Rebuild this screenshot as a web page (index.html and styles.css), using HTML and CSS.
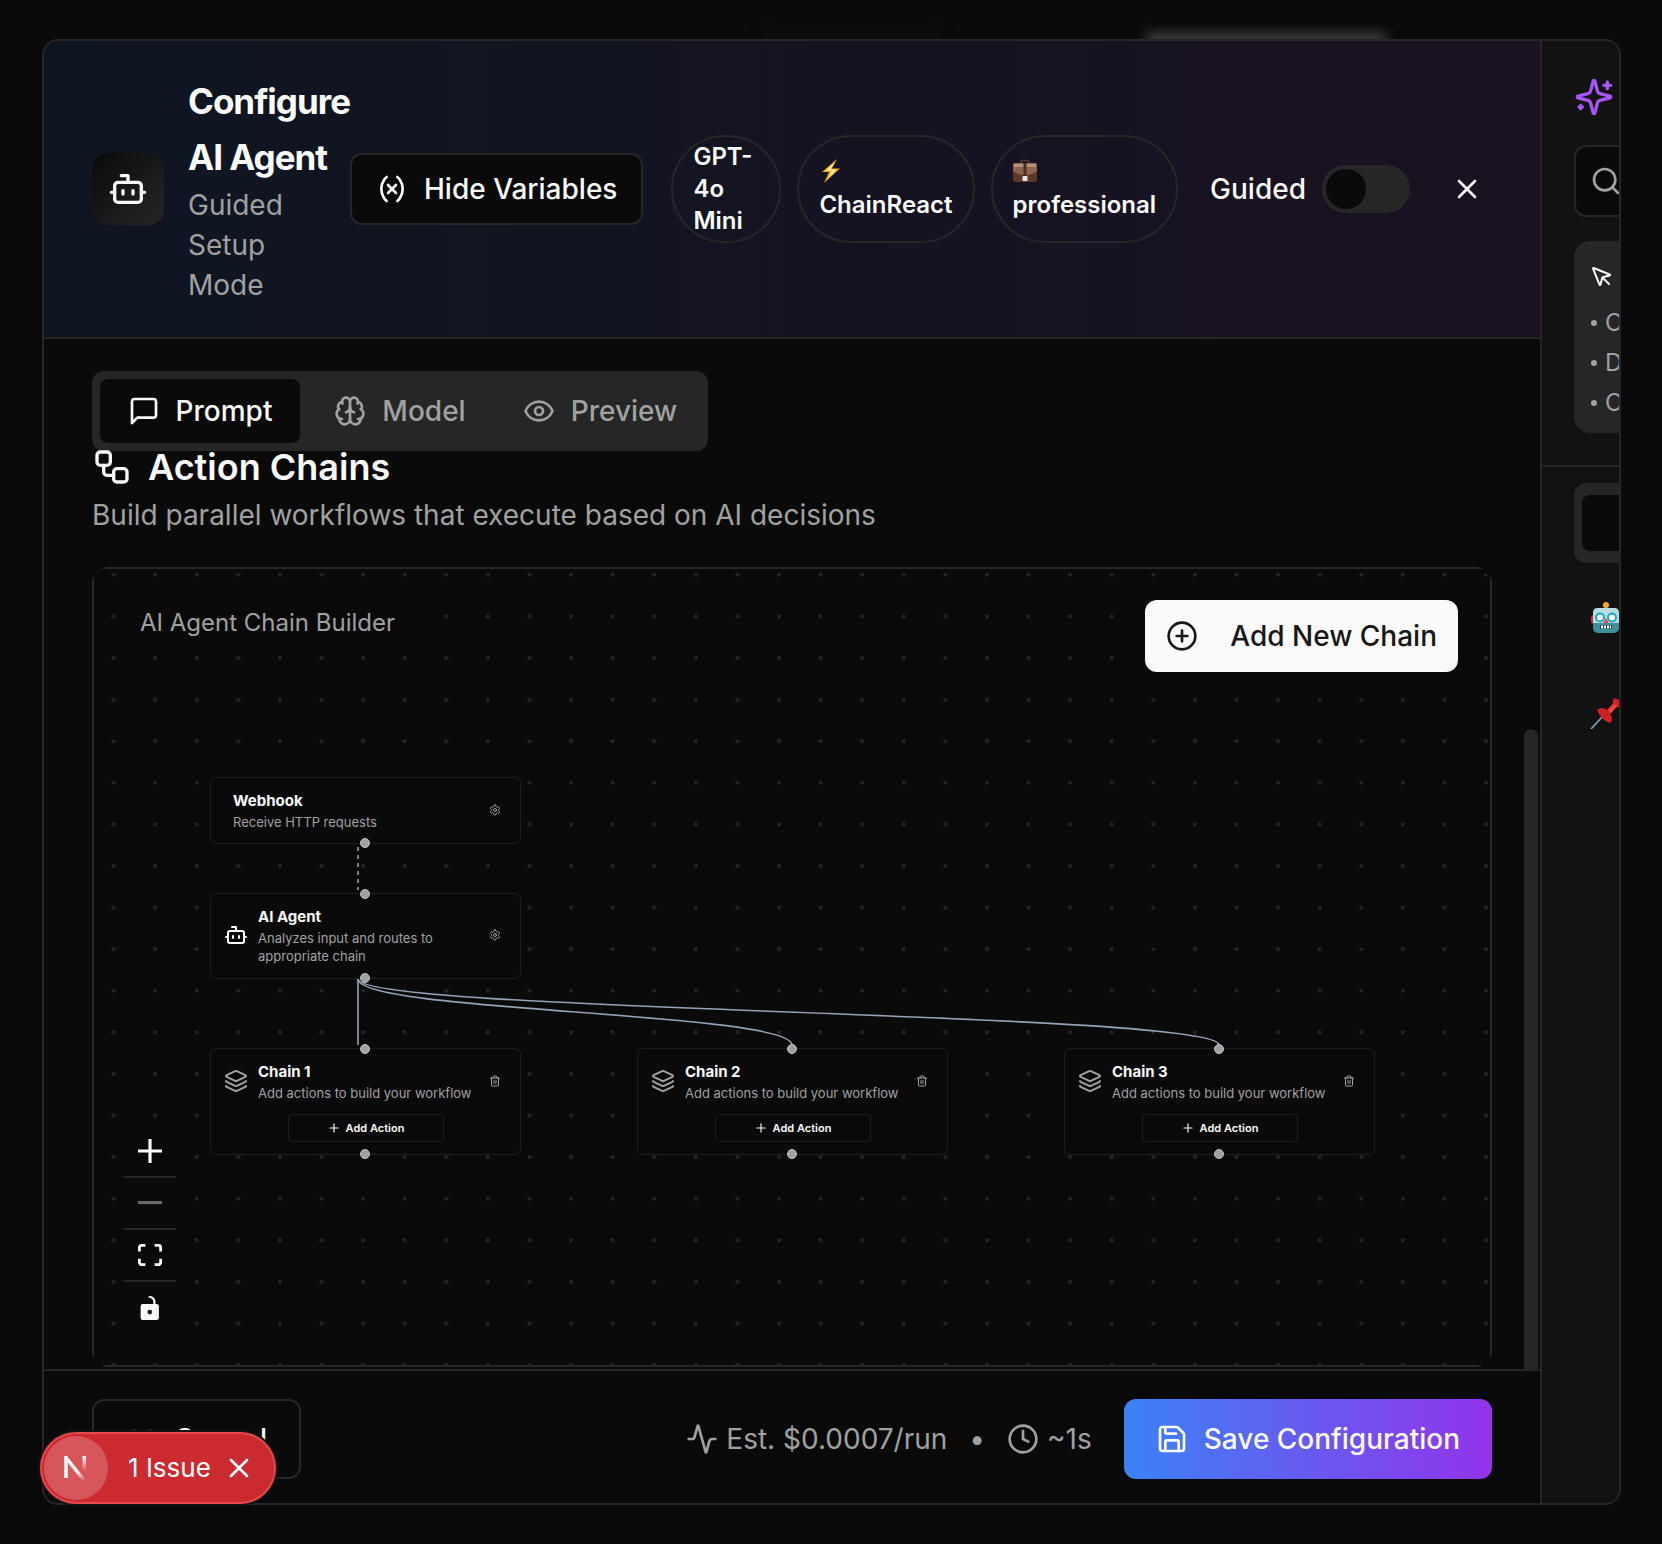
FILE: index.html
```html
<!DOCTYPE html>
<html lang="en">
<head>
<meta charset="utf-8">
<meta name="viewport" content="width=device-width, initial-scale=1">
<title>Configure AI Agent</title>
<link rel="stylesheet" href="styles.css">
</head>
<body>
<svg class="sprite" aria-hidden="true">
  <symbol id="bot" viewBox="0 0 24 24"><path d="M12 8V4H8"/><rect width="16" height="12" x="4" y="8" rx="2"/><path d="M2 14h2M20 14h2M15 13v2M9 13v2"/></symbol>
  <symbol id="variable" viewBox="0 0 24 24"><path d="M8 21s-4-3-4-9 4-9 4-9M16 3s4 3 4 9-4 9-4 9M15 9l-6 6M9 9l6 6"/></symbol>
  <symbol id="x" viewBox="0 0 24 24"><path d="M18 6 6 18M6 6l12 12"/></symbol>
  <symbol id="message" viewBox="0 0 24 24"><path d="M21 15a2 2 0 0 1-2 2H7l-4 4V5a2 2 0 0 1 2-2h14a2 2 0 0 1 2 2z"/></symbol>
  <symbol id="brain" viewBox="0 0 24 24"><path d="M12 18V5"/><path d="M15 13a4.17 4.17 0 0 1-3-4 4.17 4.17 0 0 1-3 4"/><path d="M17.598 6.5A3 3 0 1 0 12 5a3 3 0 1 0-5.598 1.5"/><path d="M17.997 5.125a4 4 0 0 1 2.526 5.77"/><path d="M18 18a4 4 0 0 0 2-7.464"/><path d="M19.967 17.483A4 4 0 1 1 12 18a4 4 0 1 1-7.967-.517"/><path d="M6 18a4 4 0 0 1-2-7.464"/><path d="M6.003 5.125a4 4 0 0 0-2.526 5.77"/></symbol>
  <symbol id="eye" viewBox="0 0 24 24"><path d="M2.062 12.348a1 1 0 0 1 0-.696 10.75 10.75 0 0 1 19.876 0 1 1 0 0 1 0 .696 10.75 10.75 0 0 1-19.876 0"/><circle cx="12" cy="12" r="3"/></symbol>
  <symbol id="workflow" viewBox="0 0 24 24"><rect width="8" height="8" x="3" y="3" rx="2"/><path d="M7 11v4a2 2 0 0 0 2 2h4"/><rect width="8" height="8" x="13" y="13" rx="2"/></symbol>
  <symbol id="plus-circle" viewBox="0 0 24 24"><circle cx="12" cy="12" r="10"/><path d="M8 12h8M12 8v8"/></symbol>
  <symbol id="plus" viewBox="0 0 24 24"><path d="M5 12h14M12 5v14"/></symbol>
  <symbol id="settings" viewBox="0 0 24 24"><path d="M12.22 2h-.44a2 2 0 0 0-2 2v.18a2 2 0 0 1-1 1.73l-.43.25a2 2 0 0 1-2 0l-.15-.08a2 2 0 0 0-2.73.73l-.22.38a2 2 0 0 0 .73 2.73l.15.1a2 2 0 0 1 1 1.72v.51a2 2 0 0 1-1 1.74l-.15.09a2 2 0 0 0-.73 2.73l.22.38a2 2 0 0 0 2.73.73l.15-.08a2 2 0 0 1 2 0l.43.25a2 2 0 0 1 1 1.73V20a2 2 0 0 0 2 2h.44a2 2 0 0 0 2-2v-.18a2 2 0 0 1 1-1.73l.43-.25a2 2 0 0 1 2 0l.15.08a2 2 0 0 0 2.73-.73l.22-.39a2 2 0 0 0-.73-2.73l-.15-.08a2 2 0 0 1-1-1.74v-.5a2 2 0 0 1 1-1.74l.15-.09a2 2 0 0 0 .73-2.73l-.22-.38a2 2 0 0 0-2.73-.73l-.15.08a2 2 0 0 1-2 0l-.43-.25a2 2 0 0 1-1-1.73V4a2 2 0 0 0-2-2z"/><circle cx="12" cy="12" r="3"/></symbol>
  <symbol id="layers" viewBox="0 0 24 24"><path d="M12.83 2.18a2 2 0 0 0-1.66 0L2.6 6.08a1 1 0 0 0 0 1.83l8.58 3.91a2 2 0 0 0 1.66 0l8.58-3.9a1 1 0 0 0 0-1.83z"/><path d="M2 12a1 1 0 0 0 .58.91l8.6 3.91a2 2 0 0 0 1.65 0l8.58-3.9A1 1 0 0 0 22 12"/><path d="M2 17a1 1 0 0 0 .58.91l8.6 3.91a2 2 0 0 0 1.65 0l8.58-3.9A1 1 0 0 0 22 17"/></symbol>
  <symbol id="trash" viewBox="0 0 24 24"><path d="M3 6h18M19 6v14a2 2 0 0 1-2 2H7a2 2 0 0 1-2-2V6M8 6V4a2 2 0 0 1 2-2h4a2 2 0 0 1 2 2v2M10 11v6M14 11v6"/></symbol>
  <symbol id="activity" viewBox="0 0 24 24"><path d="M22 12h-2.48a2 2 0 0 0-1.93 1.46l-2.35 8.36a.25.25 0 0 1-.48 0L9.24 2.18a.25.25 0 0 0-.48 0l-2.35 8.36A2 2 0 0 1 4.49 12H2"/></symbol>
  <symbol id="clock" viewBox="0 0 24 24"><circle cx="12" cy="12" r="10"/><path d="M12 6v6l4 2"/></symbol>
  <symbol id="save" viewBox="0 0 24 24"><path d="M15.2 3a2 2 0 0 1 1.4.6l3.8 3.8a2 2 0 0 1 .6 1.4V19a2 2 0 0 1-2 2H5a2 2 0 0 1-2-2V5a2 2 0 0 1 2-2z"/><path d="M17 21v-7a1 1 0 0 0-1-1H8a1 1 0 0 0-1 1v7M7 3v4a1 1 0 0 0 1 1h7"/></symbol>
  <symbol id="sparkles" viewBox="0 0 24 24"><path d="M9.937 15.5A2 2 0 0 0 8.5 14.063l-6.135-1.582a.5.5 0 0 1 0-.962L8.5 9.936A2 2 0 0 0 9.937 8.5l1.582-6.135a.5.5 0 0 1 .963 0L14.063 8.5A2 2 0 0 0 15.5 9.937l6.135 1.581a.5.5 0 0 1 0 .964L15.5 14.063a2 2 0 0 0-1.437 1.437l-1.582 6.135a.5.5 0 0 1-.963 0z"/><path d="M20 3v4M22 5h-4M4 17v2M5 18H3"/></symbol>
  <symbol id="search" viewBox="0 0 24 24"><circle cx="11" cy="11" r="8"/><path d="m21 21-4.3-4.3"/></symbol>
  <symbol id="pointer" viewBox="0 0 24 24"><path d="M12.586 12.586 19 19"/><path d="M3.688 3.037a.497.497 0 0 0-.651.651l6.5 15.999a.501.501 0 0 0 .947-.062l1.569-6.083a2 2 0 0 1 1.448-1.479l6.124-1.579a.5.5 0 0 0 .063-.947z"/></symbol>
</svg>

<div class="page">
  <div class="glow glow-bright"></div>
  <div class="glow glow-faint"></div>

  <div class="modal" role="dialog" aria-labelledby="title">
    <main class="main">
      <header class="header">
        <div class="tile"><svg class="icon i40"><use href="#bot"/></svg></div>
        <div class="titles">
          <h1 id="title">Configure AI Agent</h1>
          <p>Guided Setup Mode</p>
        </div>
        <button class="btn btn-dark" type="button"><svg class="icon i32"><use href="#variable"/></svg>Hide Variables</button>
        <div class="header-right">
          <div class="badges">
            <span class="badge badge-model">GPT-<wbr>4o Mini</span>
            <span class="badge">
              <svg class="emoji" viewBox="0 0 24 24" aria-hidden="true"><path d="M18 0 3 13h7L5 24l16-14.500h-8z" fill="#f7a81b"/><path d="M15.500 3 7 11.800h5.500L9.500 19l8-8.500h-6z" fill="#fff0a8"/></svg>
              ChainReact</span>
            <span class="badge">
              <svg class="emoji" viewBox="0 0 24 24" aria-hidden="true"><path d="M8 5V3q0-1.500 1.500-1.500h5Q16 1.500 16 3v2" fill="none" stroke="#5a3c2e" stroke-width="1.500"/><rect y="4" width="24" height="19" rx="2" fill="#5b382b"/><path d="M0 12V6q0-2 2-2h20q2 0 2 2v6q-5 4-12 4T0 12z" fill="#8d654f"/><path d="M1 5h22v3H1z" fill="#b4927c"/><path d="M10.500 4h3v13h-3z" fill="#4d2e23"/><rect x="9.500" y="17" width="5" height="5" rx="1" fill="#e8e6e4"/></svg>
              professional</span>
          </div>
          <label class="guided">Guided<input type="checkbox" class="switch"></label>
          <button class="close" type="button" aria-label="Close"><svg class="icon i32"><use href="#x"/></svg></button>
        </div>
      </header>

      <section class="body">
        <div class="tabs">
          <button class="tab active" type="button"><svg class="icon i32"><use href="#message"/></svg>Prompt</button>
          <button class="tab" type="button"><svg class="icon i32"><use href="#brain"/></svg>Model</button>
          <button class="tab" type="button"><svg class="icon i32"><use href="#eye"/></svg>Preview</button>
        </div>
        <h2><svg class="icon i40"><use href="#workflow"/></svg>Action Chains</h2>
        <p class="lead">Build parallel workflows that execute based on AI decisions</p>

        <div class="canvas">
          <svg class="backdrop" aria-hidden="true">
            <defs><pattern id="dots" x="-1.200" y="-15" width="41.590" height="41.590" patternUnits="userSpaceOnUse"><circle cx="20.800" cy="20.800" r="1.900" fill="#262626"/></pattern></defs>
            <rect width="100%" height="100%" fill="url(#dots)"/>
            <g fill="none" stroke="#94a3b8" stroke-width="1.600">
              <path d="M264 278v43" stroke-dasharray="4 4"/>
              <path d="M264 410v66"/>
              <path d="M264 410C264 443 698 443 698 476"/>
              <path d="M264 410C264 443 1125 443 1125 476"/>
            </g>
          </svg>

          <article class="node webhook">
            <div class="node-row"><div class="node-text"><h3>Webhook</h3><p>Receive HTTP requests</p></div>
            <button class="mini" type="button" aria-label="Webhook settings"><svg class="icon i12"><use href="#settings"/></svg></button></div>
            <i class="handle bottom"></i>
          </article>
          <article class="node agent">
            <i class="handle top"></i>
            <div class="node-row"><svg class="icon i24"><use href="#bot"/></svg><div class="node-text"><h3>AI Agent</h3><p>Analyzes input and routes to appropriate chain</p></div>
            <button class="mini" type="button" aria-label="Agent settings"><svg class="icon i12"><use href="#settings"/></svg></button></div>
            <i class="handle bottom"></i>
          </article>
          <article class="node chain chain-1">
            <i class="handle top"></i>
            <div class="node-row"><svg class="icon i24 muted"><use href="#layers"/></svg><div class="node-text"><h3>Chain 1</h3><p>Add actions to build your workflow</p></div>
            <button class="mini" type="button" aria-label="Delete chain 1"><svg class="icon i12"><use href="#trash"/></svg></button></div>
            <button class="add-action" type="button"><svg class="icon i14"><use href="#plus"/></svg>Add Action</button>
            <i class="handle bottom"></i>
          </article>
          <article class="node chain chain-2">
            <i class="handle top"></i>
            <div class="node-row"><svg class="icon i24 muted"><use href="#layers"/></svg><div class="node-text"><h3>Chain 2</h3><p>Add actions to build your workflow</p></div>
            <button class="mini" type="button" aria-label="Delete chain 2"><svg class="icon i12"><use href="#trash"/></svg></button></div>
            <button class="add-action" type="button"><svg class="icon i14"><use href="#plus"/></svg>Add Action</button>
            <i class="handle bottom"></i>
          </article>
          <article class="node chain chain-3">
            <i class="handle top"></i>
            <div class="node-row"><svg class="icon i24 muted"><use href="#layers"/></svg><div class="node-text"><h3>Chain 3</h3><p>Add actions to build your workflow</p></div>
            <button class="mini" type="button" aria-label="Delete chain 3"><svg class="icon i12"><use href="#trash"/></svg></button></div>
            <button class="add-action" type="button"><svg class="icon i14"><use href="#plus"/></svg>Add Action</button>
            <i class="handle bottom"></i>
          </article>

          <div class="canvas-bar">
            <span class="canvas-label">AI Agent Chain Builder</span>
            <button class="btn btn-light" type="button"><svg class="icon i32"><use href="#plus-circle"/></svg>Add New Chain</button>
          </div>
          <div class="controls">
            <button type="button" aria-label="Zoom in"><svg viewBox="0 0 32 32"><path d="M32 18.133H18.133V32h-4.266V18.133H0v-4.266h13.867V0h4.266v13.867H32z"/></svg></button>
            <button type="button" aria-label="Zoom out" disabled><svg viewBox="0 0 32 5"><path d="M0 0h32v4.200H0z"/></svg></button>
            <button type="button" aria-label="Fit view"><svg viewBox="0 0 32 30"><path d="M3.692 4.630c0-.53.4-.938.939-.938h5.215V0H4.708C2.130 0 0 2.054 0 4.630v5.216h3.692V4.631zM27.354 0h-5.200v3.692h5.170c.53 0 .984.4.984.939v5.215H32V4.631A4.624 4.624 0 0027.354 0zm.954 24.830c0 .532-.4.940-.939.940h-5.215v3.768h5.215c2.577 0 4.631-2.130 4.631-4.707v-5.139h-3.692v5.139zm-23.677.940c-.531 0-.939-.4-.939-.940v-5.138H0v5.139c0 2.577 2.130 4.707 4.708 4.707h5.138V25.770H4.631z"/></svg></button>
            <button type="button" aria-label="Toggle interactivity"><svg viewBox="0 0 25 32"><path d="M21.333 10.667H19.810V7.619C19.810 3.429 16.380 0 12.190 0c-4.114 1.828-1.370 2.133.305 2.438 1.676.305 4.420 2.590 4.420 5.181v3.048H3.047A3.056 3.056 0 000 13.714v15.238A3.056 3.056 0 003.048 32h18.285a3.056 3.056 0 003.048-3.048V13.714a3.056 3.056 0 00-3.048-3.047zM12.190 24.533a3.056 3.056 0 01-3.047-3.047 3.056 3.056 0 013.047-3.048 3.056 3.056 0 013.048 3.048 3.056 3.056 0 01-3.048 3.047z"/></svg></button>
          </div>
        </div>
        <div class="scroll-thumb"></div>
      </section>

      <footer class="footer">
        <button class="btn btn-cancel" type="button"><svg class="icon i32"><use href="#x"/></svg>Cancel</button>
        <div class="estimate">
          <span class="stat"><svg class="icon i32"><use href="#activity"/></svg>Est. $0.0007/run</span>
          <span>•</span>
          <span class="stat"><svg class="icon i32"><use href="#clock"/></svg>~1s</span>
        </div>
        <button class="btn btn-save" type="button"><svg class="icon i32"><use href="#save"/></svg>Save Configuration</button>
      </footer>
    </main>

    <aside class="side">
      <div class="side-top">
        <svg class="icon i40 violet"><use href="#sparkles"/></svg>
        <label class="search"><svg class="icon i32"><use href="#search"/></svg><input type="search" aria-label="Search variables"></label>
        <div class="tips">
          <svg class="icon i24"><use href="#pointer"/></svg>
          <ul><li>C</li><li>D</li><li>C</li></ul>
        </div>
      </div>
      <div class="side-list">
        <div class="side-tabs"><button type="button" aria-label="Variables"></button></div>
        <div class="side-item">
          <svg viewBox="0 0 32 32" aria-hidden="true"><path d="M13.500 5h5v5h-5z" fill="#5c3b78"/><circle cx="16" cy="4" r="3" fill="#f6a722"/><rect x="1" y="14" width="30" height="9" rx="3" fill="#cf2f3b"/><rect x="3" y="7" width="26" height="25" rx="5" fill="#3f8f9c"/><path d="M3 22V12q0-5 5-5h16q5 0 5 5v10z" fill="#b7dfe2"/><circle cx="10" cy="16.500" r="4" fill="#fff" stroke="#1fa5c8" stroke-width="2"/><circle cx="22" cy="16.500" r="4" fill="#fff" stroke="#1fa5c8" stroke-width="2"/><path d="m16 17 3 5h-6z" fill="#e5484d"/><path d="M10 24h12v4H10z" fill="#23444c"/><path d="M11 26h10" stroke="#fff" stroke-width="3" stroke-dasharray="2 1"/></svg>
        </div>
        <div class="side-item">
          <svg viewBox="0 0 32 32" aria-hidden="true"><path d="M1 32 13 19" stroke="#8fa3b5" stroke-width="1.600"/><path d="M7 13q5-4 10 0l6-7q-1-4 2-5 6 2 7 7-2 3-5 2l-7 7q4 5 0 9-8-2-13-13z" fill="#cf1f27"/><path d="m18 13 6-6 3 2-6 7z" fill="#f0454b"/></svg>
        </div>
      </div>
    </aside>
  </div>

  <div class="issue">
    <span class="issue-logo"><svg viewBox="0 0 28 30" aria-hidden="true"><defs><linearGradient id="fade" x1="0" y1="0" x2="0" y2="1"><stop offset="0" stop-color="#fff"/><stop offset="1" stop-color="#fff" stop-opacity="0"/></linearGradient><linearGradient id="fade2" gradientUnits="userSpaceOnUse" x1="16" y1="17" x2="24" y2="27"><stop offset="0" stop-color="#fff"/><stop offset="1" stop-color="#fff" stop-opacity="0"/></linearGradient></defs><path d="M4 25V3" stroke="#fff" stroke-width="3.500"/><path d="m3.500 4 20 25" stroke="url(#fade2)" stroke-width="3.500"/><rect x="20.500" y="3" width="3.500" height="15" fill="url(#fade)"/></svg></span>
    <button class="issue-text" type="button">1 Issue</button>
    <button class="issue-close" type="button" aria-label="Hide issues"><svg class="icon i32"><use href="#x"/></svg></button>
  </div>
</div>
</body>
</html>
```
FILE: styles.css
```css
* { box-sizing: border-box; margin: 0; padding: 0; }
:root {
  --bg: #0a0a0a;
  --line: #262626;
  --fg: #fafafa;
  --muted: #a1a1a1;
}
body { background: var(--bg); color: var(--fg); font: 400 28px/40px Inter, "Liberation Sans", sans-serif; }
button { font: inherit; color: inherit; background: none; border: 0; }
ul { list-style: none; }
.sprite { position: absolute; width: 0; height: 0; }

.icon { flex: none; display: block; fill: none; stroke: currentColor; stroke-width: 2; stroke-linecap: round; stroke-linejoin: round; }
.i12 { width: 12px; height: 12px; }
.i14 { width: 14px; height: 14px; }
.i24 { width: 24px; height: 24px; }
.i32 { width: 32px; height: 32px; }
.i40 { width: 40px; height: 40px; }
.muted { color: var(--muted); }
.violet { color: #a855f7; }

.page { position: relative; display: flex; min-height: 100vh; padding: 39px 41px 39px 42px; overflow: hidden; }
.glow { position: absolute; filter: blur(6px); }
.glow-bright { top: 32px; right: 276px; width: 240px; height: 60px; background: #3a3a3a; }
.glow-faint { top: 28px; right: 720px; width: 180px; height: 60px; background: #0e0e0e; }

.modal { position: relative; flex: 1; min-width: 0; display: flex; border: 2px solid var(--line); border-radius: 16px; background: var(--bg); overflow: hidden; }
.main { flex: 1; min-width: 0; display: flex; flex-direction: column; }

/* header */
.header { display: flex; align-items: center; padding: 32px 48px; border-bottom: 2px solid var(--line); background: linear-gradient(90deg, #0e1622, #1b1121); }
.tile { display: grid; place-items: center; flex: none; width: 72px; height: 72px; margin-right: 24px; border-radius: 16px; background: linear-gradient(135deg, #0a0a0a, #262626); }
.titles { width: 162px; flex: none; }
h1 { font-size: 35px; line-height: 56px; font-weight: 700; letter-spacing: -1px; }
.titles p { width: 120px; color: var(--muted); }
.btn { display: flex; align-items: center; justify-content: center; gap: 16px; height: 72px; border-radius: 12px; font-weight: 500; white-space: nowrap; }
.btn-dark { padding: 0 24px; border: 2px solid var(--line); background: var(--bg); }
.header-right { display: flex; align-items: center; gap: 32px; margin-left: auto; }
.badges { display: flex; gap: 16px; }
.badge { display: flex; flex-direction: column; justify-content: center; padding: 4px 20px; border: 2px solid var(--line); border-radius: 54px; font-size: 24px; line-height: 32px; font-weight: 600; }
.badge-model { display: block; width: 110px; }
.emoji { width: 24px; height: 24px; margin: 2px 0 6px; }
.guided { display: flex; align-items: center; gap: 16px; font-weight: 500; }
.switch { appearance: none; width: 88px; height: 48px; padding: 4px; border-radius: 24px; background: var(--line); }
.switch::before { content: ""; display: block; width: 40px; height: 40px; border-radius: 50%; background: var(--bg); }
.close { display: grid; place-items: center; width: 50px; height: 50px; }

/* body */
.body { position: relative; flex: 1; display: flex; flex-direction: column; padding: 32px 48px 2px; }
.tabs { display: grid; grid-template-columns: repeat(3, 200px); width: max-content; height: 80px; padding: 8px; border-radius: 12px; background: var(--line); }
.tab { display: flex; align-items: center; justify-content: center; gap: 16px; border-radius: 8px; font-weight: 500; color: var(--muted); }
.tab.active { background: var(--bg); color: var(--fg); }
h2 { display: flex; align-items: center; gap: 16px; height: 32px; font-size: 36px; font-weight: 600; }
.lead { margin: 12px 0 32px; color: var(--muted); }
.canvas {
  position: relative; flex: 1; min-height: 800px; border: 2px solid transparent; border-radius: 16px; overflow: hidden;
  background:
    linear-gradient(var(--line), var(--line)) top / calc(100% - 20px) 2px,
    linear-gradient(var(--line), var(--line)) bottom / calc(100% - 20px) 2px,
    linear-gradient(var(--line), var(--line)) left / 2px calc(100% - 20px),
    linear-gradient(var(--line), var(--line)) right / 2px calc(100% - 20px);
  background-origin: border-box;
  background-clip: border-box;
  background-repeat: no-repeat;
}
.backdrop { position: absolute; inset: 0; width: 100%; height: 100%; }
.scroll-thumb { position: absolute; top: 390px; right: 2px; bottom: 0; width: 14px; border-radius: 7px 7px 0 0; background: var(--line); }

.canvas-bar { position: relative; display: flex; justify-content: space-between; align-items: flex-start; padding: 31px 32px 31px 30px; }
.canvas-label { padding: 3px 16px 5px; background: var(--bg); color: var(--muted); font-size: 24px; }
.btn-light { gap: 32px; padding: 0 21px; background: var(--fg); color: #171717; }
.controls { position: absolute; left: 30px; bottom: 31px; display: flex; flex-direction: column; background: var(--bg); }
.controls button { display: grid; place-items: center; width: 52px; height: 52px; border-bottom: 2px solid var(--line); }
.controls button:last-child { border-bottom: 0; }
.controls svg { display: block; max-width: 24px; max-height: 24px; width: 24px; fill: var(--fg); }
.controls button:disabled svg { fill-opacity: 0.400; }

/* nodes */
.node { position: absolute; width: 311px; border: 1px solid #1e1e1e; border-radius: 6px; background: var(--bg); }
.node-row { display: flex; align-items: center; gap: 10px; padding: 11px 19px 13px 13px; }
.node-text { flex: 1; min-width: 0; }
.node h3 { font-size: 15px; line-height: 24px; font-weight: 700; }
.node p { font-size: 13px; line-height: 18px; color: var(--muted); }
.mini { display: grid; place-items: center; width: 12px; height: 12px; color: var(--muted); }
.webhook { left: 116px; top: 208px; }
.webhook .node-row { padding: 11px 19px 12px 22px; }
.agent { left: 116px; top: 324px; }
.chain { top: 479px; }
.chain .node-row { padding-bottom: 12px; }
.chain .node-text { white-space: nowrap; }
.chain-1 { left: 116px; }
.chain-2 { left: 543px; }
.chain-3 { left: 970px; }
.add-action { display: flex; align-items: center; justify-content: center; gap: 5px; width: 156px; height: 28px; margin: 0 auto 12px; border: 1px solid #1e1e1e; border-radius: 4px; font-size: 11px; line-height: 16px; font-weight: 600; }
.handle { position: absolute; left: 149px; width: 10px; height: 10px; border: 1px solid #c4c4c4; border-radius: 50%; background: var(--muted); }
.handle.top { top: -5px; }
.handle.bottom { bottom: -5px; }

/* footer */
.footer { display: flex; align-items: center; padding: 28px 48px 24px; border-top: 2px solid var(--line); }
.footer .btn { height: 80px; padding: 0 32px; }
.footer .btn-cancel { border: 2px solid var(--line); }
.btn-save { background: linear-gradient(90deg, #3b82f6, #9333ea); }
.estimate { display: flex; align-items: center; gap: 22px; margin: 0 32px 0 auto; color: var(--muted); }
.stat { display: flex; align-items: center; gap: 8px; }

/* sidebar */
.side { flex: none; width: 79px; border-left: 2px solid var(--line); background: #121212; overflow: hidden; }
.side-top { display: flex; flex-direction: column; align-items: flex-start; padding: 36px 0 32px 32px; border-bottom: 2px solid var(--line); }
.search { display: flex; align-items: center; width: 240px; height: 72px; margin: 28px 0 24px; padding: 0 14px; border: 2px solid var(--line); border-radius: 12px; background: var(--bg); color: var(--muted); }
.search input { width: 160px; background: none; border: 0; }
.tips { width: 240px; padding: 24px 16px 10px; border-radius: 16px; background: var(--line); }
.tips ul { padding-top: 14px; color: var(--muted); font-size: 24px; }
.tips li { display: flex; align-items: center; gap: 8px; }
.tips li::before { content: ""; width: 6px; height: 6px; margin-left: 1px; border-radius: 50%; background: currentColor; }
.side-list { display: flex; flex-direction: column; padding: 16px 0 0 32px; }
.side-tabs { width: 240px; height: 80px; padding: 12px 8px; border-radius: 12px; background: var(--line); }
.side-tabs button { display: block; width: 120px; height: 56px; border-radius: 8px; background: var(--bg); }
.side-item { height: 72px; margin-top: 24px; padding: 14px 0 0 16px; }
.side-item svg { display: block; width: 32px; height: 32px; }

/* issue indicator */
.issue { position: absolute; left: 40px; bottom: 40px; display: flex; align-items: center; width: 236px; height: 72px; padding: 2px; border: 2px solid #e5484d; border-radius: 36px; background: #ca2a30; box-shadow: 0 0 0 2px #141414; color: #fff; }
.issue-logo { display: grid; place-items: center; flex: none; width: 64px; height: 64px; border-radius: 50%; background: #d6565b; }
.issue-logo svg { width: 28px; height: 30px; }
.issue-text { margin-left: 20px; font-size: 26px; white-space: nowrap; }
.issue-close { display: grid; place-items: center; margin-left: 12px; }
```
